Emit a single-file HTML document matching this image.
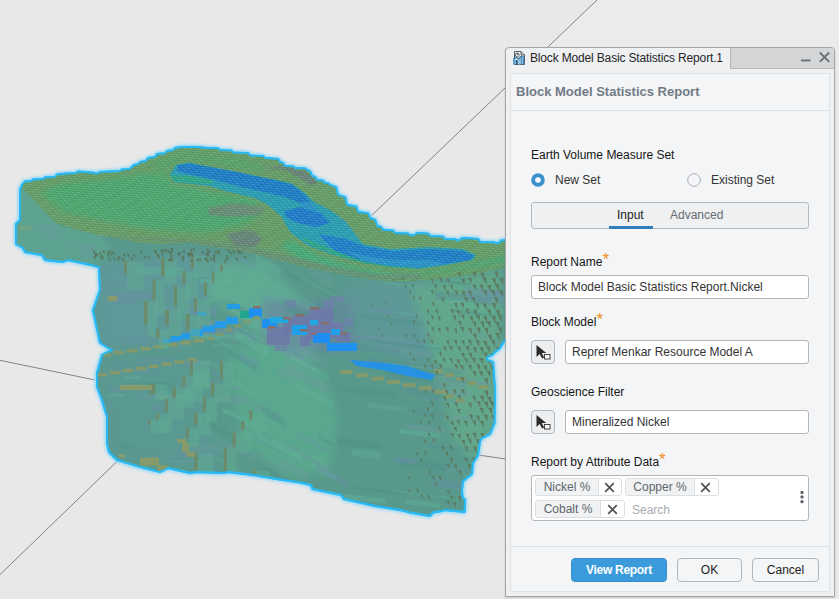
<!DOCTYPE html>
<html lang="en">
<head>
<meta charset="utf-8">
<title>Block Model Basic Statistics Report</title>
<style>
html,body{margin:0;padding:0;}
body{width:839px;height:599px;overflow:hidden;background:#e8e8e8;position:relative;font-family:"Liberation Sans",Arial,sans-serif;font-size:12px;color:#1c1c1c;}
#scene{position:absolute;left:0;top:0;width:839px;height:599px;display:block;}
.abs{position:absolute;}
#dlg{position:absolute;left:505px;top:47px;width:330px;height:550px;box-sizing:border-box;background:#eef0f2;border:1px solid #a4a6a8;border-radius:4px 4px 0 0;box-shadow:0 1px 2px rgba(0,0,0,.15);}
#tbar{position:absolute;left:0;top:0;width:328px;height:21px;}
#tbar .inactive{position:absolute;left:224px;top:0;width:104px;height:21px;background:#d4d6d8;border-bottom:1px solid #b4b6b8;border-left:1px solid #b4b6b8;border-radius:0 3px 0 0;box-sizing:border-box;}
#ttl{position:absolute;left:24px;top:2px;font-size:12px;line-height:16px;color:#262626;white-space:nowrap;letter-spacing:-0.16px;}
#panel{position:absolute;left:4px;top:25px;width:320px;height:519px;box-sizing:border-box;background:#f3f5f7;border:1px solid #dfe2e5;}
#hdr{position:absolute;left:0;top:0;width:318px;height:36px;border-bottom:1px solid #dde0e3;}
#hdr span{position:absolute;left:5px;top:10px;font-weight:bold;font-size:13px;line-height:16px;color:#727b85;white-space:nowrap;}
.lbl{position:absolute;left:20px;font-size:12px;line-height:14px;white-space:nowrap;color:#161616;}
.req{color:#ee8d22;font-size:17px;font-weight:normal;position:relative;top:-1px;left:0px;line-height:0;}
.inp{position:absolute;box-sizing:border-box;height:24px;background:#fff;border:1px solid #b3b6b9;border-radius:3px;font-size:12px;line-height:22px;padding-left:6px;color:#333;white-space:nowrap;overflow:hidden;}
.pick{position:absolute;left:20px;box-sizing:border-box;width:24px;height:24px;background:#eceef0;border:1px solid #b3b6b9;border-radius:4px;}
.btn{position:absolute;top:484px;box-sizing:border-box;height:24px;border:1px solid #b3b6b9;border-radius:4px;background:#f4f5f6;font-size:12px;line-height:22px;text-align:center;color:#1c1c1c;}
.chip{position:absolute;box-sizing:border-box;height:18px;border:1px solid #dcdfe2;border-radius:3px;background:#fff;overflow:hidden;}
.chip .t{position:absolute;left:0;top:0;bottom:0;background:#f0f2f3;border-right:1px solid #dcdfe2;font-size:12px;line-height:16px;color:#5f666d;text-align:center;}
.chip svg{position:absolute;top:3px;}
</style>
</head>
<body>
<svg id="scene" width="839" height="599" viewBox="0 0 839 599">
<rect width="839" height="599" fill="#e8e8e8"/>
<!--SCENE-->
<defs><filter id="glow" x="-5%" y="-5%" width="110%" height="110%"><feGaussianBlur stdDeviation="1.5"/></filter><filter id="b1" x="-20%" y="-20%" width="140%" height="140%"><feGaussianBlur stdDeviation="0.8"/></filter><filter id="b2" x="-20%" y="-20%" width="140%" height="140%"><feGaussianBlur stdDeviation="2.5"/></filter><filter id="b4" x="-30%" y="-30%" width="160%" height="160%"><feGaussianBlur stdDeviation="5"/></filter><clipPath id="cs"><polygon points="22,185 25,181.5 31.2,181.1 33,179.5 43.2,179.1 45,177.5 55.2,176.8 57,174.5 67,173.5 76.2,173.1 78,171.5 90,172.5 94.2,172.8 96,174 100,172 112,171.5 120.2,171.1 122,169.5 129.2,169.2 131,168 134,165 138.2,164.3 140,162 146.2,161.1 148,158 155.2,157.1 157,154 165.2,153.3 167,151 173.2,150.3 175,148 183,147 195,147 207,148 218.2,148.4 220,150 231.2,150.6 233,152.5 248.2,153.2 250,155.5 263.2,156.1 265,158 278.2,158.9 280,162 283.2,162.9 285,166 293.2,166.4 295,168 305.2,168.4 307,170 310.2,171.3 312,176 315.2,176.9 317,180 323.2,180.7 325,183 328.2,183.4 330,185 336.2,187.2 338,195 345.2,197.2 347,205 356.2,206.5 358,212 368.2,213.3 370,218 375.2,219.8 377,226 381.2,226.9 383,230 393.2,230.7 395,233 408.2,233.6 410,235.5 415.2,234.9 417,233 428.2,233.7 430,236 443.2,236.7 445,239 455.2,239.3 457,240.5 460.2,239.9 462,238 478.2,238.9 480,242 494.2,242.3 496,243.5 499.2,242.8 501,240.5 512,240 512,340 505,340 500,348 495,352 492,355 487,357 487,360 493,362 495,390 494.5,423 490,434 482,438 480,441 478,455 473,463 472,474 463,481 462,490 462.5,497 465,500 464.5,512 445,510 442,511 433,512.5 430,516 410,512.5 400,510 375,506 344,499 341,495 312.5,489 311,485 300,482.5 280,479.5 253,475 228,472 223,473 197,472 190,473 168,468 160,472 140,467 117,460 109,452 107,443 107,417 102,400 97,387 97,373 102,355 112,350 100,343 95,320 93,310 100,290 99,267 91,265 68,260 63,262 45,260 42,255 25,252 23,248 16,244 16,224 20,220 20,190"/></clipPath><clipPath id="ct"><polygon points="22,185 25,181.5 31.2,181.1 33,179.5 43.2,179.1 45,177.5 55.2,176.8 57,174.5 67,173.5 76.2,173.1 78,171.5 90,172.5 94.2,172.8 96,174 100,172 112,171.5 120.2,171.1 122,169.5 129.2,169.2 131,168 134,165 138.2,164.3 140,162 146.2,161.1 148,158 155.2,157.1 157,154 165.2,153.3 167,151 173.2,150.3 175,148 183,147 195,147 207,148 218.2,148.4 220,150 231.2,150.6 233,152.5 248.2,153.2 250,155.5 263.2,156.1 265,158 278.2,158.9 280,162 283.2,162.9 285,166 293.2,166.4 295,168 305.2,168.4 307,170 310.2,171.3 312,176 315.2,176.9 317,180 323.2,180.7 325,183 328.2,183.4 330,185 336.2,187.2 338,195 345.2,197.2 347,205 356.2,206.5 358,212 368.2,213.3 370,218 375.2,219.8 377,226 381.2,226.9 383,230 393.2,230.7 395,233 408.2,233.6 410,235.5 415.2,234.9 417,233 428.2,233.7 430,236 443.2,236.7 445,239 455.2,239.3 457,240.5 460.2,239.9 462,238 478.2,238.9 480,242 494.2,242.3 496,243.5 499.2,242.8 501,240.5 512,240 512,266 497,269 475,274 440,278.5 405,281.5 375,280 330,272 297,265 263,256 230,249 200,245 190,243 160,244 139,242.5 122,239 96,234.5 74,228.7 56,223 45,212 34,200 25,190.5 21,187"/></clipPath><pattern id="grid" width="5.4" height="2.400" patternUnits="userSpaceOnUse" patternTransform="matrix(1 0.07 0.9 1 0 0)"><rect x="0" y="0" width="3" height="0.9" fill="#7fe0c8" fill-opacity=".32"/><rect x="0" y="1.5" width="5.4" height=".9" fill="#2a5a40" fill-opacity=".10"/></pattern></defs>
<polygon points="597,0 839,0 839,599 506,599 506,86" fill="#ebebeb"/>
<path d="M597 0L369 218" stroke="#838383" stroke-width="1" fill="none"/>
<path d="M0 360.300L95 380" stroke="#838383" stroke-width="1" fill="none"/>
<path d="M0 574.600L118 460.500" stroke="#838383" stroke-width="1" fill="none"/>
<path d="M478 455L506 459" stroke="#838383" stroke-width="1" fill="none"/>
<polygon points="22,185 25,181.5 31.2,181.1 33,179.5 43.2,179.1 45,177.5 55.2,176.8 57,174.5 67,173.5 76.2,173.1 78,171.5 90,172.5 94.2,172.8 96,174 100,172 112,171.5 120.2,171.1 122,169.5 129.2,169.2 131,168 134,165 138.2,164.3 140,162 146.2,161.1 148,158 155.2,157.1 157,154 165.2,153.3 167,151 173.2,150.3 175,148 183,147 195,147 207,148 218.2,148.4 220,150 231.2,150.6 233,152.5 248.2,153.2 250,155.5 263.2,156.1 265,158 278.2,158.9 280,162 283.2,162.9 285,166 293.2,166.4 295,168 305.2,168.4 307,170 310.2,171.3 312,176 315.2,176.9 317,180 323.2,180.7 325,183 328.2,183.4 330,185 336.2,187.2 338,195 345.2,197.2 347,205 356.2,206.5 358,212 368.2,213.3 370,218 375.2,219.8 377,226 381.2,226.9 383,230 393.2,230.7 395,233 408.2,233.6 410,235.5 415.2,234.9 417,233 428.2,233.7 430,236 443.2,236.7 445,239 455.2,239.3 457,240.5 460.2,239.9 462,238 478.2,238.9 480,242 494.2,242.3 496,243.5 499.2,242.8 501,240.5 512,240 512,340 505,340 500,348 495,352 492,355 487,357 487,360 493,362 495,390 494.5,423 490,434 482,438 480,441 478,455 473,463 472,474 463,481 462,490 462.5,497 465,500 464.5,512 445,510 442,511 433,512.5 430,516 410,512.5 400,510 375,506 344,499 341,495 312.5,489 311,485 300,482.5 280,479.5 253,475 228,472 223,473 197,472 190,473 168,468 160,472 140,467 117,460 109,452 107,443 107,417 102,400 97,387 97,373 102,355 112,350 100,343 95,320 93,310 100,290 99,267 91,265 68,260 63,262 45,260 42,255 25,252 23,248 16,244 16,224 20,220 20,190" fill="#8fd8f8" stroke="#8fd8f8" stroke-width="5" stroke-linejoin="round" filter="url(#glow)"/>
<polygon points="22,185 25,181.5 31.2,181.1 33,179.5 43.2,179.1 45,177.5 55.2,176.8 57,174.5 67,173.5 76.2,173.1 78,171.5 90,172.5 94.2,172.8 96,174 100,172 112,171.5 120.2,171.1 122,169.5 129.2,169.2 131,168 134,165 138.2,164.3 140,162 146.2,161.1 148,158 155.2,157.1 157,154 165.2,153.3 167,151 173.2,150.3 175,148 183,147 195,147 207,148 218.2,148.4 220,150 231.2,150.6 233,152.5 248.2,153.2 250,155.5 263.2,156.1 265,158 278.2,158.9 280,162 283.2,162.9 285,166 293.2,166.4 295,168 305.2,168.4 307,170 310.2,171.3 312,176 315.2,176.9 317,180 323.2,180.7 325,183 328.2,183.4 330,185 336.2,187.2 338,195 345.2,197.2 347,205 356.2,206.5 358,212 368.2,213.3 370,218 375.2,219.8 377,226 381.2,226.9 383,230 393.2,230.7 395,233 408.2,233.6 410,235.5 415.2,234.9 417,233 428.2,233.7 430,236 443.2,236.7 445,239 455.2,239.3 457,240.5 460.2,239.9 462,238 478.2,238.9 480,242 494.2,242.3 496,243.5 499.2,242.8 501,240.5 512,240 512,340 505,340 500,348 495,352 492,355 487,357 487,360 493,362 495,390 494.5,423 490,434 482,438 480,441 478,455 473,463 472,474 463,481 462,490 462.5,497 465,500 464.5,512 445,510 442,511 433,512.5 430,516 410,512.5 400,510 375,506 344,499 341,495 312.5,489 311,485 300,482.5 280,479.5 253,475 228,472 223,473 197,472 190,473 168,468 160,472 140,467 117,460 109,452 107,443 107,417 102,400 97,387 97,373 102,355 112,350 100,343 95,320 93,310 100,290 99,267 91,265 68,260 63,262 45,260 42,255 25,252 23,248 16,244 16,224 20,220 20,190" fill="#58998c" stroke="#2cbcf4" stroke-width="2" stroke-linejoin="round"/>
<g clip-path="url(#cs)">
<g filter="url(#b4)">
<polygon points="95,262 215,250 225,300 190,345 100,352" fill="#6396a0" fill-opacity=".6"/>
<polygon points="97,360 200,355 215,470 110,460" fill="#5f95a0" fill-opacity=".3"/>
<polygon points="215,262 262,262 300,300 318,350 300,380 262,340 232,312 210,300" fill="#60ac94" fill-opacity=".9"/>
<polygon points="228,350 262,345 322,372 338,420 330,470 290,478 240,440" fill="#5aa88e" fill-opacity=".9"/>
<polygon points="340,285 430,278 430,360 400,362 360,340" fill="#6098a0" fill-opacity=".55"/>
<polygon points="408,288 500,270 498,420 474,462 452,440 442,385 426,330" fill="#64aa8c" fill-opacity=".8"/>
<polygon points="262,300 350,300 356,350 300,354 262,340" fill="#6a80a6" fill-opacity=".55"/>
</g>
<rect x="37" y="224" width="21" height="5" fill="#6a90a6" fill-opacity=".6"/>
<rect x="40" y="229" width="18" height="6" fill="#6a90a6" fill-opacity=".6"/>
<rect x="44" y="235" width="14" height="5" fill="#6a90a6" fill-opacity=".6"/>
<rect x="66" y="243.5" width="8" height="5" fill="#6a90a6" fill-opacity=".6"/>
<rect x="79" y="244" width="16" height="7" fill="#6a90a6" fill-opacity=".6"/>
<rect x="82" y="251" width="13" height="7" fill="#6a90a6" fill-opacity=".6"/>
<rect x="18.5" y="225.7" width="13" height="4.5" fill="#7f9a6c" />
<polygon points="14,190 24,186 58,222 100,234 112,250 96,268 40,260 14,248" fill="#60aa94" fill-opacity=".55" filter="url(#b2)"/>
<polygon points="133.86,293.377 171.643,293.377 171.643,295.877 133.86,295.877" fill="#6a90a8" fill-opacity="0.27"/>
<polygon points="164.935,451.218 187.449,451.218 187.449,453.718 164.935,453.718" fill="#6c9a9e" fill-opacity="0.35"/>
<polygon points="123.88,376.618 140.948,376.618 140.948,379.118 123.88,379.118" fill="#62b49a" fill-opacity="0.41"/>
<polygon points="164.96,274.867 200.454,274.867 200.454,277.367 164.96,277.367" fill="#62b49a" fill-opacity="0.26"/>
<polygon points="198.016,322.239 218.065,322.239 218.065,324.739 198.016,324.739" fill="#6a90a8" fill-opacity="0.33"/>
<polygon points="192.935,299.591 228.291,299.591 228.291,304.591 192.935,304.591" fill="#4f9088" fill-opacity="0.27"/>
<polygon points="180.453,379.389 217.119,379.389 217.119,386.889 180.453,386.889" fill="#6a90a8" fill-opacity="0.36"/>
<polygon points="132.698,383.797 163.559,383.797 163.559,388.797 132.698,388.797" fill="#62b49a" fill-opacity="0.45"/>
<polygon points="178.879,312.772 213.984,312.772 213.984,320.272 178.879,320.272" fill="#4f9088" fill-opacity="0.43"/>
<polygon points="129.553,465.876 148.685,465.876 148.685,473.376 129.553,473.376" fill="#62b49a" fill-opacity="0.44"/>
<polygon points="113.238,363.704 129.61,363.704 129.61,366.204 113.238,366.204" fill="#6a90a8" fill-opacity="0.39"/>
<polygon points="200.057,327.259 239.393,327.259 239.393,334.759 200.057,334.759" fill="#6a90a8" fill-opacity="0.45"/>
<polygon points="103.252,281.468 127.699,281.468 127.699,283.968 103.252,283.968" fill="#6a8eaa" fill-opacity="0.43"/>
<polygon points="132.153,382.213 170.996,382.213 170.996,389.713 132.153,389.713" fill="#4f9088" fill-opacity="0.43"/>
<polygon points="201.445,334.177 249.368,334.177 249.368,339.177 201.445,339.177" fill="#62b49a" fill-opacity="0.40"/>
<polygon points="154.243,307.387 179.303,307.387 179.303,312.387 154.243,312.387" fill="#6c9a9e" fill-opacity="0.35"/>
<polygon points="199.571,278.761 230.292,278.761 230.292,283.761 199.571,283.761" fill="#62b49a" fill-opacity="0.45"/>
<polygon points="198.678,319.912 228.214,319.912 228.214,324.912 198.678,324.912" fill="#6c9a9e" fill-opacity="0.49"/>
<polygon points="113.111,298.653 136.229,298.653 136.229,303.653 113.111,303.653" fill="#6a8eaa" fill-opacity="0.37"/>
<polygon points="165.695,316.651 180.838,316.651 180.838,324.151 165.695,324.151" fill="#6a90a8" fill-opacity="0.34"/>
<polygon points="162.961,460.244 202.128,460.244 202.128,462.744 162.961,462.744" fill="#6c9a9e" fill-opacity="0.47"/>
<polygon points="188.596,443.899 231.522,443.899 231.522,451.399 188.596,451.399" fill="#6c9a9e" fill-opacity="0.35"/>
<polygon points="107.424,393.932 124.603,393.932 124.603,396.432 107.424,396.432" fill="#62b49a" fill-opacity="0.36"/>
<polygon points="108.191,386.951 126.775,386.951 126.775,391.951 108.191,391.951" fill="#6a90a8" fill-opacity="0.28"/>
<polygon points="138.633,267.304 184.235,267.304 184.235,274.804 138.633,274.804" fill="#62b49a" fill-opacity="0.41"/>
<polygon points="209.656,387.274 241.251,387.274 241.251,389.774 209.656,389.774" fill="#6c9a9e" fill-opacity="0.50"/>
<polygon points="150.919,362.638 168.925,362.638 168.925,365.138 150.919,365.138" fill="#4f9088" fill-opacity="0.44"/>
<polygon points="152.435,405.948 185.506,405.948 185.506,410.948 152.435,410.948" fill="#6a90a8" fill-opacity="0.34"/>
<polygon points="177.808,452.142 219.343,452.142 219.343,457.142 177.808,457.142" fill="#6a8eaa" fill-opacity="0.42"/>
<polygon points="126.334,338.274 147.18,338.274 147.18,343.274 126.334,343.274" fill="#6a90a8" fill-opacity="0.39"/>
<polygon points="155.324,394.38 191.787,394.38 191.787,399.38 155.324,399.38" fill="#62b49a" fill-opacity="0.45"/>
<polygon points="183.785,309.162 216.902,309.162 216.902,314.162 183.785,314.162" fill="#6a8eaa" fill-opacity="0.50"/>
<polygon points="189.814,360.226 211.591,360.226 211.591,365.226 189.814,365.226" fill="#6c9a9e" fill-opacity="0.45"/>
<polygon points="181.775,334.7 230.883,334.7 230.883,337.2 181.775,337.2" fill="#62b49a" fill-opacity="0.28"/>
<polygon points="151.41,332.249 183.302,332.249 183.302,334.749 151.41,334.749" fill="#6c9a9e" fill-opacity="0.48"/>
<polygon points="136.281,395.772 180.494,395.772 180.494,398.272 136.281,398.272" fill="#6c9a9e" fill-opacity="0.45"/>
<polygon points="185.017,361.431 206.265,361.431 206.265,366.431 185.017,366.431" fill="#6a8eaa" fill-opacity="0.45"/>
<polygon points="211.599,344.334 240.647,344.334 240.647,346.834 211.599,346.834" fill="#62b49a" fill-opacity="0.29"/>
<polygon points="110.245,293.439 156.914,293.439 156.914,298.439 110.245,298.439" fill="#6a90a8" fill-opacity="0.46"/>
<polygon points="212.637,398.712 239.901,398.712 239.901,403.712 212.637,403.712" fill="#6a8eaa" fill-opacity="0.25"/>
<polygon points="211.507,397.132 244.937,397.132 244.937,402.132 211.507,402.132" fill="#6c9a9e" fill-opacity="0.50"/>
<polygon points="118.377,443.773 134.356,443.773 134.356,448.773 118.377,448.773" fill="#4f9088" fill-opacity="0.38"/>
<polygon points="186.642,329.806 220.694,329.806 220.694,334.806 186.642,334.806" fill="#6a8eaa" fill-opacity="0.48"/>
<polygon points="137.454,357.297 172.871,357.297 172.871,364.797 137.454,364.797" fill="#6a90a8" fill-opacity="0.28"/>
<polygon points="113.22,368.194 158.769,368.194 158.769,373.194 113.22,373.194" fill="#6a90a8" fill-opacity="0.25"/>
<polygon points="296.905,287.916 326.109,303.979 326.109,306.479 296.905,290.416" fill="#6c9a9e" fill-opacity="0.27"/>
<polygon points="283.468,366.76 312.943,382.971 312.943,385.471 283.468,369.26" fill="#6c9a9e" fill-opacity="0.26"/>
<polygon points="227,259.284 244.933,269.147 244.933,276.647 227,266.784" fill="#6c9a9e" fill-opacity="0.26"/>
<polygon points="307.811,263.941 332.58,277.564 332.58,287.564 307.811,273.941" fill="#6c9a9e" fill-opacity="0.38"/>
<polygon points="284.664,349.516 315.663,366.565 315.663,374.065 284.664,357.016" fill="#6c9a9e" fill-opacity="0.49"/>
<polygon points="285.41,442.838 328.675,466.634 328.675,471.634 285.41,447.838" fill="#6c9a9e" fill-opacity="0.47"/>
<polygon points="228.298,348.456 255.797,363.581 255.797,371.081 228.298,355.956" fill="#4f9088" fill-opacity="0.33"/>
<polygon points="282.183,344.235 303.564,355.994 303.564,360.994 282.183,349.235" fill="#6a8eaa" fill-opacity="0.47"/>
<polygon points="222.761,407.546 257.569,426.691 257.569,431.691 222.761,412.546" fill="#62b49a" fill-opacity="0.47"/>
<polygon points="316.268,298.309 359.843,322.276 359.843,329.776 316.268,305.809" fill="#4f9088" fill-opacity="0.29"/>
<polygon points="281.801,299.217 317.99,319.121 317.99,329.121 281.801,309.217" fill="#4f9088" fill-opacity="0.33"/>
<polygon points="227.511,320.076 264.175,340.241 264.175,342.741 227.511,322.576" fill="#62b49a" fill-opacity="0.39"/>
<polygon points="255.653,253.978 280.598,267.698 280.598,277.698 255.653,263.978" fill="#62b49a" fill-opacity="0.38"/>
<polygon points="212.393,466.718 251.044,487.976 251.044,490.476 212.393,469.218" fill="#6a8eaa" fill-opacity="0.32"/>
<polygon points="209.553,421.379 232.666,434.092 232.666,439.092 209.553,426.379" fill="#4f9088" fill-opacity="0.46"/>
<polygon points="282.737,458.12 309.915,473.068 309.915,483.068 282.737,468.12" fill="#6c9a9e" fill-opacity="0.39"/>
<polygon points="285.548,269.682 302.274,278.881 302.274,283.881 285.548,274.682" fill="#4f9088" fill-opacity="0.47"/>
<polygon points="235.926,253.703 253.583,263.414 253.583,268.414 235.926,258.703" fill="#6a8eaa" fill-opacity="0.40"/>
<polygon points="230.577,308.179 249.227,318.437 249.227,320.937 230.577,310.679" fill="#62b49a" fill-opacity="0.50"/>
<polygon points="253.042,451.394 286.694,469.902 286.694,472.402 253.042,453.894" fill="#6c9a9e" fill-opacity="0.43"/>
<polygon points="312.884,463.227 335.741,475.798 335.741,480.798 312.884,468.227" fill="#62b49a" fill-opacity="0.48"/>
<polygon points="277.297,366.839 298.473,378.486 298.473,385.986 277.297,374.339" fill="#6c9a9e" fill-opacity="0.42"/>
<polygon points="236.11,426.809 280.945,451.469 280.945,453.969 236.11,429.309" fill="#6a8eaa" fill-opacity="0.25"/>
<polygon points="263.15,465.171 293.577,481.906 293.577,486.906 263.15,470.171" fill="#4f9088" fill-opacity="0.28"/>
<polygon points="299.176,345.079 329.026,361.497 329.026,368.997 299.176,352.579" fill="#6c9a9e" fill-opacity="0.33"/>
<polygon points="229.746,300.505 250.705,312.032 250.705,317.032 229.746,305.505" fill="#4f9088" fill-opacity="0.50"/>
<polygon points="317.916,434.137 333.344,442.623 333.344,447.623 317.916,439.137" fill="#4f9088" fill-opacity="0.29"/>
<polygon points="214.716,435.079 255.832,457.693 255.832,462.693 214.716,440.079" fill="#6c9a9e" fill-opacity="0.31"/>
<polygon points="238.702,351.08 258.428,361.929 258.428,369.429 238.702,358.58" fill="#6a8eaa" fill-opacity="0.32"/>
<polygon points="315.605,463.977 347.018,481.254 347.018,486.254 315.605,468.977" fill="#6a8eaa" fill-opacity="0.49"/>
<polygon points="240.598,328.448 255.63,336.716 255.63,344.216 240.598,335.948" fill="#6a8eaa" fill-opacity="0.37"/>
<polygon points="262.818,294.216 292.96,310.794 292.96,313.294 262.818,296.716" fill="#6a8eaa" fill-opacity="0.32"/>
<polygon points="215.322,337.892 231.572,346.83 231.572,349.33 215.322,340.392" fill="#62b49a" fill-opacity="0.33"/>
<polygon points="231.773,378.828 262.649,395.81 262.649,400.81 231.773,383.828" fill="#5fae92" fill-opacity="0.47"/>
<polygon points="295.165,381.243 333.094,402.104 333.094,409.604 295.165,388.743" fill="#62b49a" fill-opacity="0.32"/>
<polygon points="276.151,281.845 315.897,303.706 315.897,313.706 276.151,291.845" fill="#5fae92" fill-opacity="0.36"/>
<polygon points="285.621,361.219 327.918,384.482 327.918,394.482 285.621,371.219" fill="#6c9a9e" fill-opacity="0.46"/>
<polygon points="297.538,431.81 330.06,449.697 330.06,454.697 297.538,436.81" fill="#6a8eaa" fill-opacity="0.26"/>
<polygon points="220.306,329.356 238.453,339.337 238.453,346.837 220.306,336.856" fill="#6c9a9e" fill-opacity="0.26"/>
<polygon points="207.167,366.918 229.503,379.203 229.503,384.203 207.167,371.918" fill="#6a8eaa" fill-opacity="0.36"/>
<polygon points="213.063,455.151 254.999,478.216 254.999,480.716 213.063,457.651" fill="#5fae92" fill-opacity="0.38"/>
<polygon points="290.759,354.249 330.035,375.851 330.035,380.851 290.759,359.249" fill="#62b49a" fill-opacity="0.43"/>
<polygon points="228.6,412.762 272.872,437.112 272.872,444.612 228.6,420.262" fill="#4f9088" fill-opacity="0.27"/>
<polygon points="309.704,313.21 326.106,322.232 326.106,327.232 309.704,318.21" fill="#6a8eaa" fill-opacity="0.40"/>
<polygon points="243.154,393.338 278.94,413.02 278.94,423.02 243.154,403.338" fill="#6c9a9e" fill-opacity="0.28"/>
<polygon points="260.478,356.876 304.654,381.172 304.654,383.672 260.478,359.376" fill="#5fae92" fill-opacity="0.30"/>
<polygon points="261.306,405.952 284.872,418.913 284.872,426.413 261.306,413.452" fill="#4f9088" fill-opacity="0.44"/>
<polygon points="319.23,370.797 343.58,384.189 343.58,386.689 319.23,373.297" fill="#4f9088" fill-opacity="0.25"/>
<polygon points="257.782,430.377 301.825,454.601 301.825,462.101 257.782,437.877" fill="#62b49a" fill-opacity="0.35"/>
<polygon points="310.404,454.718 327.642,464.199 327.642,466.699 310.404,457.218" fill="#62b49a" fill-opacity="0.44"/>
<polygon points="235.108,329.102 268.209,347.307 268.209,357.307 235.108,339.102" fill="#62b49a" fill-opacity="0.47"/>
<polygon points="285.884,300.904 327.815,323.967 327.815,331.467 285.884,308.404" fill="#4f9088" fill-opacity="0.26"/>
<polygon points="205.413,358.173 233.936,373.861 233.936,378.861 205.413,363.173" fill="#5fae92" fill-opacity="0.29"/>
<polygon points="244.555,319.537 284.762,341.651 284.762,344.151 244.555,322.037" fill="#62b49a" fill-opacity="0.44"/>
<polygon points="301.498,276.409 344.29,299.945 344.29,302.445 301.498,278.909" fill="#5fae92" fill-opacity="0.32"/>
<polygon points="379.556,366.438 449.495,374.831 449.495,377.331 379.556,368.938" fill="#4f9088" fill-opacity="0.48"/>
<polygon points="440.905,467.936 474.937,472.02 474.937,474.52 440.905,470.436" fill="#4f9088" fill-opacity="0.41"/>
<polygon points="343.826,493.628 385.638,498.646 385.638,503.646 343.826,498.628" fill="#62b49a" fill-opacity="0.44"/>
<polygon points="445.623,374.104 467.073,376.679 467.073,384.179 445.623,381.604" fill="#5a8c98" fill-opacity="0.39"/>
<polygon points="435.132,290.885 491.749,297.679 491.749,305.179 435.132,298.385" fill="#5a8c98" fill-opacity="0.44"/>
<polygon points="423.119,342.966 445.567,345.66 445.567,350.66 423.119,347.966" fill="#62b49a" fill-opacity="0.37"/>
<polygon points="374.986,345.51 431.938,352.344 431.938,357.344 374.986,350.51" fill="#6c9a9e" fill-opacity="0.41"/>
<polygon points="368.134,402.611 407.852,407.377 407.852,412.377 368.134,407.611" fill="#62b49a" fill-opacity="0.27"/>
<polygon points="400.097,458.602 447.616,464.304 447.616,471.804 400.097,466.102" fill="#4f9088" fill-opacity="0.50"/>
<polygon points="391.994,310.711 421.614,314.266 421.614,316.766 391.994,313.211" fill="#62b49a" fill-opacity="0.34"/>
<polygon points="334.575,332.608 367.493,336.558 367.493,341.558 334.575,337.608" fill="#6a8eaa" fill-opacity="0.44"/>
<polygon points="386.045,371.054 432.253,376.599 432.253,384.099 386.045,378.554" fill="#4f9088" fill-opacity="0.33"/>
<polygon points="329.93,341.054 398.314,349.26 398.314,354.26 329.93,346.054" fill="#5a8c98" fill-opacity="0.38"/>
<polygon points="446.45,466.699 471.08,469.655 471.08,474.655 446.45,471.699" fill="#6c9a9e" fill-opacity="0.35"/>
<polygon points="391.337,489.868 453.772,497.36 453.772,499.86 391.337,492.368" fill="#62b49a" fill-opacity="0.26"/>
<polygon points="433.522,477.053 477.185,482.293 477.185,489.793 433.522,484.553" fill="#6a8eaa" fill-opacity="0.27"/>
<polygon points="468.838,484.195 515.231,489.763 515.231,497.263 468.838,491.695" fill="#6c9a9e" fill-opacity="0.31"/>
<polygon points="337.447,313.963 383.566,319.497 383.566,321.997 337.447,316.463" fill="#6c9a9e" fill-opacity="0.27"/>
<polygon points="444.298,280.301 470.58,283.454 470.58,285.954 444.298,282.801" fill="#4f9088" fill-opacity="0.49"/>
<polygon points="420.236,396.216 462.107,401.24 462.107,403.74 420.236,398.716" fill="#6a8eaa" fill-opacity="0.27"/>
<polygon points="403.91,408.236 443.314,412.965 443.314,417.965 403.91,413.236" fill="#5a8c98" fill-opacity="0.25"/>
<polygon points="405.996,499.202 439.926,503.274 439.926,508.274 405.996,504.202" fill="#62b49a" fill-opacity="0.37"/>
<polygon points="357.563,334.353 425.594,342.517 425.594,347.517 357.563,339.353" fill="#6a8eaa" fill-opacity="0.26"/>
<polygon points="399.73,428.382 440.73,433.302 440.73,438.302 399.73,433.382" fill="#62b49a" fill-opacity="0.42"/>
<polygon points="468.026,329.893 489.731,332.498 489.731,337.498 468.026,334.893" fill="#6c9a9e" fill-opacity="0.34"/>
<polygon points="383.417,281.486 418.023,285.638 418.023,288.138 383.417,283.986" fill="#62b49a" fill-opacity="0.37"/>
<polygon points="352.066,448.489 381.763,452.052 381.763,459.552 352.066,455.989" fill="#62b49a" fill-opacity="0.32"/>
<polygon points="462.293,303.982 513.473,310.123 513.473,315.123 462.293,308.982" fill="#62b49a" fill-opacity="0.37"/>
<polygon points="465.663,292.412 515.403,298.381 515.403,305.881 465.663,299.912" fill="#6a8eaa" fill-opacity="0.30"/>
<polygon points="475.859,311.22 498.451,313.931 498.451,316.431 475.859,313.72" fill="#62b49a" fill-opacity="0.35"/>
<polygon points="463.707,474.388 520.343,481.185 520.343,483.685 463.707,476.888" fill="#62b49a" fill-opacity="0.33"/>
<polygon points="349.682,485.894 406.997,492.772 406.997,495.272 349.682,488.394" fill="#4f9088" fill-opacity="0.42"/>
<polygon points="380.579,362.254 417.164,366.645 417.164,371.645 380.579,367.254" fill="#6a8eaa" fill-opacity="0.25"/>
<polygon points="364.769,357.323 432.545,365.456 432.545,367.956 364.769,359.823" fill="#5a8c98" fill-opacity="0.49"/>
<polygon points="353.184,358.458 414.263,365.788 414.263,373.288 353.184,365.958" fill="#6a8eaa" fill-opacity="0.26"/>
<polygon points="395.754,361.997 461.73,369.914 461.73,374.914 395.754,366.997" fill="#4f9088" fill-opacity="0.34"/>
<polygon points="463.519,286.662 504.059,291.527 504.059,299.027 463.519,294.162" fill="#6a8eaa" fill-opacity="0.34"/>
<polygon points="394.248,456.734 417.348,459.506 417.348,464.506 394.248,461.734" fill="#6a8eaa" fill-opacity="0.47"/>
<polygon points="374.251,339.909 442.136,348.055 442.136,350.555 374.251,342.409" fill="#4f9088" fill-opacity="0.44"/>
<polygon points="430.332,483.33 465.203,487.515 465.203,490.015 430.332,485.83" fill="#6a8eaa" fill-opacity="0.46"/>
<polygon points="337.162,437.426 380.449,442.62 380.449,450.12 337.162,444.926" fill="#4f9088" fill-opacity="0.48"/>
<polygon points="450.368,309.196 495.195,314.575 495.195,317.075 450.368,311.696" fill="#4f9088" fill-opacity="0.46"/>
<polygon points="443.65,413.596 480.039,417.963 480.039,422.963 443.65,418.596" fill="#6c9a9e" fill-opacity="0.34"/>
<polygon points="445.16,297.383 475.025,300.967 475.025,305.967 445.16,302.383" fill="#62b49a" fill-opacity="0.35"/>
<polygon points="423.927,385.972 471.158,391.639 471.158,396.639 423.927,390.972" fill="#6c9a9e" fill-opacity="0.47"/>
<polygon points="478.052,338.276 502.256,341.181 502.256,343.681 478.052,340.776" fill="#6c9a9e" fill-opacity="0.37"/>
<polygon points="433.563,378.332 465.273,382.137 465.273,389.637 433.563,385.832" fill="#6c9a9e" fill-opacity="0.41"/>
<polygon points="427.857,444.555 490.207,452.037 490.207,454.537 427.857,447.055" fill="#4f9088" fill-opacity="0.32"/>
<polygon points="410.701,362.054 467.605,368.882 467.605,373.882 410.701,367.054" fill="#6c9a9e" fill-opacity="0.31"/>
<polygon points="359.254,313.731 423.463,321.436 423.463,326.436 359.254,318.731" fill="#4f9088" fill-opacity="0.27"/>
<polygon points="360.265,334.109 406.58,339.667 406.58,342.167 360.265,336.609" fill="#6c9a9e" fill-opacity="0.50"/>
<polygon points="336.373,384.448 397.328,391.762 397.328,399.262 336.373,391.948" fill="#4f9088" fill-opacity="0.26"/>
<polygon points="366.988,306.228 396.467,309.765 396.467,314.765 366.988,311.228" fill="#6a8eaa" fill-opacity="0.34"/>
<polygon points="458.58,378.805 491.578,382.765 491.578,385.265 458.58,381.305" fill="#6a8eaa" fill-opacity="0.41"/>
<polygon points="433.553,356.934 455.426,359.559 455.426,364.559 433.553,361.934" fill="#62b49a" fill-opacity="0.26"/>
<polygon points="479.98,288.412 536.591,295.205 536.591,300.205 479.98,293.412" fill="#6a8eaa" fill-opacity="0.45"/>
<polygon points="385.439,361.798 436.49,367.924 436.49,370.424 385.439,364.298" fill="#62b49a" fill-opacity="0.26"/>
<polygon points="399.3,386.372 439.709,391.221 439.709,398.721 399.3,393.872" fill="#5a8c98" fill-opacity="0.29"/>
<polygon points="405.44,423.673 445.328,428.459 445.328,433.459 405.44,428.673" fill="#6c9a9e" fill-opacity="0.50"/>
<polygon points="426.85,371.926 449.418,374.634 449.418,379.634 426.85,376.926" fill="#6c9a9e" fill-opacity="0.35"/>
<rect x="163" y="339" width="8" height="4" fill="#259ae6" />
<rect x="171" y="336" width="10" height="5" fill="#259ae6" />
<rect x="181" y="333" width="10" height="6" fill="#259ae6" />
<rect x="191" y="329" width="12" height="7" fill="#259ae6" />
<rect x="203" y="325" width="12" height="7" fill="#259ae6" />
<rect x="215" y="321" width="11" height="7" fill="#259ae6" />
<rect x="226" y="317" width="12" height="7" fill="#259ae6" />
<rect x="197" y="312" width="10" height="4" fill="#259ae6" />
<rect x="227" y="304" width="13" height="5" fill="#259ae6" />
<rect x="267" y="327" width="23" height="18" fill="#6e78a8" fill-opacity=".88"/>
<rect x="283" y="318" width="12" height="17" fill="#6e78a8" fill-opacity=".88"/>
<rect x="293" y="315" width="17" height="13" fill="#6e78a8" fill-opacity=".88"/>
<rect x="310" y="308" width="23" height="20" fill="#6e78a8" fill-opacity=".88"/>
<rect x="307" y="327" width="13" height="13" fill="#6e78a8" fill-opacity=".88"/>
<rect x="318" y="323" width="25" height="15" fill="#6e78a8" fill-opacity=".88"/>
<rect x="337" y="333" width="13" height="9" fill="#6e78a8" fill-opacity=".88"/>
<rect x="300" y="336" width="10" height="10" fill="#6e78a8" fill-opacity=".88"/>
<rect x="286" y="300" width="10" height="8" fill="#6c82a8" fill-opacity=".7"/>
<rect x="322" y="300" width="12" height="8" fill="#6c82a8" fill-opacity=".7"/>
<rect x="344" y="318" width="10" height="8" fill="#6c82a8" fill-opacity=".7"/>
<rect x="275" y="345" width="12" height="6" fill="#6c82a8" fill-opacity=".7"/>
<rect x="330" y="296" width="14" height="6" fill="#6c82a8" fill-opacity=".7"/>
<rect x="249" y="308" width="13" height="10" fill="#1e90f0" />
<rect x="262" y="319" width="15" height="9" fill="#1e90f0" />
<rect x="270" y="317" width="18" height="6" fill="#22a8e0" />
<rect x="292" y="325" width="15" height="10" fill="#20a0e8" />
<rect x="310" y="320" width="8" height="5" fill="#22a8e0" />
<rect x="313" y="333" width="17" height="10" fill="#1e8cf0" />
<rect x="331" y="329" width="9" height="6" fill="#20a0e8" />
<rect x="327" y="343" width="30" height="8" fill="#1e90ee" />
<rect x="240" y="311" width="9" height="7" fill="#22a590" />
<rect x="310" y="307" width="9" height="2.5" fill="#86706a" />
<rect x="296" y="314" width="8" height="2.5" fill="#86706a" />
<rect x="283" y="317" width="8" height="2.5" fill="#86706a" />
<rect x="321" y="322" width="8" height="2.5" fill="#86706a" />
<rect x="340" y="332" width="7" height="2.5" fill="#86706a" />
<rect x="268" y="326" width="8" height="2.5" fill="#86706a" />
<rect x="300" y="329" width="8" height="2.5" fill="#86706a" />
<rect x="311" y="333" width="6" height="2" fill="#86706a" />
<rect x="253" y="306" width="8" height="2.5" fill="#86706a" />
<polygon points="350,360 382,362.5 407,366 435,375 432,380 407,376 382,370 357,366" fill="#2592e4" />
<rect x="100" y="353" width="10.7" height="3.5" fill="#849a6c" />
<rect x="113.375" y="351" width="10.7" height="3.5" fill="#849a6c" />
<rect x="126.75" y="349" width="10.7" height="3.5" fill="#849a6c" />
<rect x="140.125" y="347" width="10.7" height="3.5" fill="#849a6c" />
<rect x="153.5" y="345" width="10.7" height="3.5" fill="#849a6c" />
<rect x="166.875" y="343" width="10.7" height="3.5" fill="#849a6c" />
<rect x="180.25" y="341" width="10.7" height="3.5" fill="#849a6c" />
<rect x="193.625" y="339" width="10.7" height="3.5" fill="#849a6c" />
<rect x="97" y="373" width="10.3" height="3.5" fill="#849a6c" />
<rect x="109.875" y="370.875" width="10.3" height="3.5" fill="#849a6c" />
<rect x="122.75" y="368.75" width="10.3" height="3.5" fill="#849a6c" />
<rect x="135.625" y="366.625" width="10.3" height="3.5" fill="#849a6c" />
<rect x="148.5" y="364.5" width="10.3" height="3.5" fill="#849a6c" />
<rect x="161.375" y="362.375" width="10.3" height="3.5" fill="#849a6c" />
<rect x="174.25" y="360.25" width="10.3" height="3.5" fill="#849a6c" />
<rect x="187.125" y="358.125" width="10.3" height="3.5" fill="#849a6c" />
<rect x="340" y="370" width="12.5714" height="4" fill="#849a6c" />
<rect x="355.714" y="373.286" width="12.5714" height="4" fill="#849a6c" />
<rect x="371.429" y="376.571" width="12.5714" height="4" fill="#849a6c" />
<rect x="387.143" y="379.857" width="12.5714" height="4" fill="#849a6c" />
<rect x="402.857" y="383.143" width="12.5714" height="4" fill="#849a6c" />
<rect x="418.571" y="386.429" width="12.5714" height="4" fill="#849a6c" />
<rect x="434.286" y="389.714" width="12.5714" height="4" fill="#849a6c" />
<rect x="434" y="369" width="8.96" height="4" fill="#849a6c" />
<rect x="445.2" y="373" width="8.96" height="4" fill="#849a6c" />
<rect x="456.4" y="377" width="8.96" height="4" fill="#849a6c" />
<rect x="467.6" y="381" width="8.96" height="4" fill="#849a6c" />
<rect x="478.8" y="385" width="8.96" height="4" fill="#849a6c" />
<rect x="423" y="386" width="8.8" height="3.5" fill="#849a6c" />
<rect x="434" y="390.25" width="8.8" height="3.5" fill="#849a6c" />
<rect x="445" y="394.5" width="8.8" height="3.5" fill="#849a6c" />
<rect x="456" y="398.75" width="8.8" height="3.5" fill="#849a6c" />
<rect x="207" y="337" width="7.33333" height="3" fill="#7f9a70" />
<rect x="216.167" y="332.833" width="7.33333" height="3" fill="#7f9a70" />
<rect x="225.333" y="328.667" width="7.33333" height="3" fill="#7f9a70" />
<rect x="234.5" y="324.5" width="7.33333" height="3" fill="#7f9a70" />
<rect x="243.667" y="320.333" width="7.33333" height="3" fill="#7f9a70" />
<rect x="252.833" y="316.167" width="7.33333" height="3" fill="#7f9a70" />
<polygon points="22,185 25,181.5 31.2,181.1 33,179.5 43.2,179.1 45,177.5 55.2,176.8 57,174.5 67,173.5 76.2,173.1 78,171.5 90,172.5 94.2,172.8 96,174 100,172 112,171.5 120.2,171.1 122,169.5 129.2,169.2 131,168 134,165 138.2,164.3 140,162 146.2,161.1 148,158 155.2,157.1 157,154 165.2,153.3 167,151 173.2,150.3 175,148 183,147 195,147 207,148 218.2,148.4 220,150 231.2,150.6 233,152.5 248.2,153.2 250,155.5 263.2,156.1 265,158 278.2,158.9 280,162 283.2,162.9 285,166 293.2,166.4 295,168 305.2,168.4 307,170 310.2,171.3 312,176 315.2,176.9 317,180 323.2,180.7 325,183 328.2,183.4 330,185 336.2,187.2 338,195 345.2,197.2 347,205 356.2,206.5 358,212 368.2,213.3 370,218 375.2,219.8 377,226 381.2,226.9 383,230 393.2,230.7 395,233 408.2,233.6 410,235.5 415.2,234.9 417,233 428.2,233.7 430,236 443.2,236.7 445,239 455.2,239.3 457,240.5 460.2,239.9 462,238 478.2,238.9 480,242 494.2,242.3 496,243.5 499.2,242.8 501,240.5 512,240 512,266 497,269 475,274 440,278.5 405,281.5 375,280 330,272 297,265 263,256 230,249 200,245 190,243 160,244 139,242.5 122,239 96,234.5 74,228.7 56,223 45,212 34,200 25,190.5 21,187" fill="#699b66" />
<g clip-path="url(#ct)">
<polygon points="40,192 60,184 100,180 140,174 165,172 172,184 215,192 255,200 262,214 240,226 200,233 150,229 100,220 62,212" fill="#50a56e" filter="url(#b2)"/>
<polygon points="150,162 185,152 230,157 262,164 262,172 236,168 206,163 189,159 170,166 160,176" fill="#5ca068" filter="url(#b2)"/>
<polygon points="290,240 320,256 360,268 400,274 440,270 480,262 505,256 505,262 470,268 430,274 400,278 370,276 330,268 297,258 280,246" fill="#48a878" filter="url(#b2)"/>
<polygon points="207,208 235,203 264,207 262,215 232,217 210,215" fill="#6c8a74" filter="url(#b1)"/>
<polygon points="226,234 250,230 262,238 256,247 235,247" fill="#6a8278" filter="url(#b1)"/>
<polygon points="262,168 285,170 300,178 312,186 318,182 306,172 285,166" fill="#6d7f78" filter="url(#b1)"/>
<polygon points="100,236 200,245 263,256 330,272 375,280 420,279 420,274 375,274 330,266 263,250 200,240" fill="#6b8a78" fill-opacity=".7" filter="url(#b1)"/>
<polygon points="170,174 176,165 189,162.5 206,166 236,171.5 262,177 279,180.5 292,183.5 305,193 313,201 330,210 345,221 363,244 390,249 430,247 463,249 476,255 473,260 447,265 417,269 390,267 363,263 330,254 307,245 290,232 281,216 268,205 255,198 225,191 210,186 174,182" fill="#2a9cb4" />
<polygon points="170,175 190,176 212,180 212,184 190,183 174,181" fill="#30a486" />
<polygon points="300,236 325,247 362,259 390,264 417,266 417,269 390,267 363,263 330,253 307,243" fill="#30a486" />
<polygon points="178,165 190,163.5 206,166.5 236,172 262,177.5 279,181 292,184.5 304,194 311,202 300,203 285,197 262,191.5 240,186.5 215,180 190,174.5 177,171" fill="#1f7ac8" />
<polygon points="284,211 300,207 322,214 330,223 316,227 297,223 286,217" fill="#2078cc" />
<polygon points="300,203 311,202 322,214 300,207" fill="#2a90c8" />
<polygon points="318,234 345,238.5 365,246.5 392,251 430,249 462,250.5 474,255.5 470,260 446,264 417,267.5 390,266 363,261 335,251" fill="#1f7cca" />
<polygon points="345,250 365,256 392,260 430,260 446,264 417,267.5 390,266 363,261" fill="#2a90cc" />
<polygon points="22,185 25,181.5 31.2,181.1 33,179.5 43.2,179.1 45,177.5 55.2,176.8 57,174.5 67,173.5 76.2,173.1 78,171.5 90,172.5 94.2,172.8 96,174 100,172 112,171.5 120.2,171.1 122,169.5 129.2,169.2 131,168 134,165 138.2,164.3 140,162 146.2,161.1 148,158 155.2,157.1 157,154 165.2,153.3 167,151 173.2,150.3 175,148 183,147 195,147 207,148 218.2,148.4 220,150 231.2,150.6 233,152.5 248.2,153.2 250,155.5 263.2,156.1 265,158 278.2,158.9 280,162 283.2,162.9 285,166 293.2,166.4 295,168 305.2,168.4 307,170 310.2,171.3 312,176 315.2,176.9 317,180 323.2,180.7 325,183 328.2,183.4 330,185 336.2,187.2 338,195 345.2,197.2 347,205 356.2,206.5 358,212 368.2,213.3 370,218 375.2,219.8 377,226 381.2,226.9 383,230 393.2,230.7 395,233 408.2,233.6 410,235.5 415.2,234.9 417,233 428.2,233.7 430,236 443.2,236.7 445,239 455.2,239.3 457,240.5 460.2,239.9 462,238 478.2,238.9 480,242 494.2,242.3 496,243.5 499.2,242.8 501,240.5 512,240 512,266 497,269 475,274 440,278.5 405,281.5 375,280 330,272 297,265 263,256 230,249 200,245 190,243 160,244 139,242.5 122,239 96,234.5 74,228.7 56,223 45,212 34,200 25,190.5 21,187" fill="url(#grid)"/>
</g>
<rect x="127" y="262" width="16.7782" height="27.9662" fill="#60ab92" fill-opacity=".5"/>
<rect x="164.5" y="258.5" width="12.274" height="25.972" fill="#60ab92" fill-opacity=".5"/>
<rect x="194" y="256" width="15.5523" height="21.0367" fill="#60ab92" fill-opacity=".5"/>
<rect x="155.5" y="280" width="9.05289" height="35.0163" fill="#60ab92" fill-opacity=".5"/>
<rect x="177" y="287" width="12.8138" height="33.7037" fill="#60ab92" fill-opacity=".5"/>
<rect x="185.5" y="272" width="12.656" height="26.8284" fill="#60ab92" fill-opacity=".5"/>
<rect x="207" y="283.5" width="13.1482" height="19.1254" fill="#60ab92" fill-opacity=".5"/>
<rect x="214.5" y="273.5" width="9.13351" height="21.0155" fill="#60ab92" fill-opacity=".5"/>
<rect x="223" y="266" width="14.766" height="20.5979" fill="#60ab92" fill-opacity=".5"/>
<rect x="147.5" y="302" width="9.80128" height="35.2219" fill="#60ab92" fill-opacity=".5"/>
<rect x="169" y="311" width="12.3376" height="25.0446" fill="#60ab92" fill-opacity=".5"/>
<rect x="189.5" y="315" width="10.313" height="23.833" fill="#60ab92" fill-opacity=".5"/>
<rect x="197" y="298.5" width="13.6904" height="28.255" fill="#60ab92" fill-opacity=".5"/>
<rect x="159.5" y="330" width="9.97914" height="18.9051" fill="#60ab92" fill-opacity=".5"/>
<rect x="193" y="361" width="16.2433" height="28.6688" fill="#60ab92" fill-opacity=".5"/>
<rect x="223" y="362" width="10.7761" height="24.2665" fill="#60ab92" fill-opacity=".5"/>
<rect x="185.5" y="377" width="17.4877" height="25.2555" fill="#60ab92" fill-opacity=".5"/>
<rect x="155.5" y="385" width="13.3446" height="15.5337" fill="#60ab92" fill-opacity=".5"/>
<rect x="176" y="388.5" width="17.3355" height="19.379" fill="#60ab92" fill-opacity=".5"/>
<rect x="193" y="371" width="17.138" height="16.2034" fill="#60ab92" fill-opacity=".5"/>
<rect x="214.5" y="383.5" width="16.421" height="19.1028" fill="#60ab92" fill-opacity=".5"/>
<rect x="168" y="400" width="16.0724" height="19.7208" fill="#60ab92" fill-opacity=".5"/>
<rect x="159" y="415" width="12.6404" height="18.4635" fill="#60ab92" fill-opacity=".5"/>
<rect x="150.5" y="421" width="16.4627" height="11.8297" fill="#60ab92" fill-opacity=".5"/>
<rect x="206" y="398.5" width="10.9632" height="22.9975" fill="#60ab92" fill-opacity=".5"/>
<rect x="197.5" y="413.5" width="13.661" height="21.3358" fill="#60ab92" fill-opacity=".5"/>
<rect x="189" y="428.5" width="10.1075" height="17.9706" fill="#60ab92" fill-opacity=".5"/>
<rect x="197.5" y="453" width="15.5239" height="32.973" fill="#60ab92" fill-opacity=".5"/>
<rect x="227" y="448.5" width="9.36989" height="34.6234" fill="#60ab92" fill-opacity=".5"/>
<rect x="236" y="433.5" width="15.8172" height="19.3813" fill="#60ab92" fill-opacity=".5"/>
<rect x="244.5" y="422" width="16.5438" height="15.1773" fill="#60ab92" fill-opacity=".5"/>
<rect x="252.5" y="411" width="14.3957" height="20.5005" fill="#60ab92" fill-opacity=".5"/>
<rect x="255.5" y="471" width="14.6434" height="13.0621" fill="#60ab92" fill-opacity=".5"/>
<polygon points="124,261 127,261 127,273 124,275" fill="#6a8c6c" />
<polygon points="161,257.5 164.5,257.5 164.5,275.5 161,277.5" fill="#6a8c6c" />
<polygon points="191,255 194,255 194,268 191,270" fill="#6a8c6c" />
<polygon points="152.5,279 155.5,279 155.5,299 152.5,301" fill="#6a8c6c" />
<polygon points="174,286 177,286 177,305.5 174,307.5" fill="#6a8c6c" />
<polygon points="182.5,271 185.5,271 185.5,283 182.5,285" fill="#6a8c6c" />
<polygon points="204,282.5 207,282.5 207,294 204,296" fill="#6a8c6c" />
<polygon points="212,272.5 214.5,272.5 214.5,282 212,284" fill="#6a8c6c" />
<polygon points="220,265 223,265 223,270.5 220,272.5" fill="#6a8c6c" />
<polygon points="144,301 147.5,301 147.5,324 144,326" fill="#6a8c6c" />
<polygon points="165,310 169,310 169,324 165,326" fill="#6a8c6c" />
<polygon points="186,314 189.5,314 189.5,329 186,331" fill="#6a8c6c" />
<polygon points="194,297.5 197,297.5 197,310.5 194,312.5" fill="#6a8c6c" />
<polygon points="156,329 159.5,329 159.5,337 156,339" fill="#6a8c6c" />
<polygon points="190,360 193,360 193,373 190,375" fill="#6a8c6c" />
<polygon points="220,361 223,361 223,378 220,380" fill="#6a8c6c" />
<polygon points="182.5,376 185.5,376 185.5,385.5 182.5,387.5" fill="#6a8c6c" />
<polygon points="150,384 155.5,384 155.5,393 150,395" fill="#6a8c6c" />
<polygon points="172.5,387.5 176,387.5 176,397 172.5,399" fill="#6a8c6c" />
<polygon points="190,370 193,370 193,374 190,376" fill="#6a8c6c" />
<polygon points="211,382.5 214.5,382.5 214.5,394 211,396" fill="#6a8c6c" />
<polygon points="165,399 168,399 168,410.5 165,412.5" fill="#6a8c6c" />
<polygon points="156,414 159,414 159,418 156,420" fill="#6a8c6c" />
<polygon points="148,420 150.5,420 150.5,424 148,426" fill="#6a8c6c" />
<polygon points="203,397.5 206,397.5 206,410.5 203,412.5" fill="#6a8c6c" />
<polygon points="194,412.5 197.5,412.5 197.5,424 194,426" fill="#6a8c6c" />
<polygon points="186,427.5 189,427.5 189,437 186,439" fill="#6a8c6c" />
<polygon points="194,452 197.5,452 197.5,470 194,472" fill="#6a8c6c" />
<polygon points="224,447.5 227,447.5 227,470.5 224,472.5" fill="#6a8c6c" />
<polygon points="232.5,432.5 236,432.5 236,445.5 232.5,447.5" fill="#6a8c6c" />
<polygon points="241,421 244.5,421 244.5,429 241,431" fill="#6a8c6c" />
<polygon points="249,410 252.5,410 252.5,419 249,421" fill="#6a8c6c" />
<polygon points="252.5,470 255.5,470 255.5,474 252.5,476" fill="#6a8c6c" />
<rect x="107.5" y="296" width="10" height="5" fill="#869a6c" />
<rect x="120" y="385" width="32" height="5" fill="#869a6c" />
<rect x="140" y="457.5" width="19" height="8" fill="#869a6c" />
<rect x="157.5" y="465" width="10" height="6" fill="#869a6c" />
<rect x="119" y="454" width="6" height="3.5" fill="#869a6c" />
<rect x="177.5" y="439" width="9" height="4" fill="#869a6c" />
<rect x="182" y="443" width="7" height="9" fill="#869a6c" />
<rect x="186" y="452" width="9" height="5" fill="#869a6c" />
<path d="M156.271 254.277h2.6v4z" fill="#58785e"/>
<path d="M157.138 255.209h2.6v4z" fill="#58785e"/>
<path d="M160.359 252.627h2.6v4z" fill="#58785e"/>
<path d="M95.5764 253.498h2.6v4z" fill="#58785e"/>
<path d="M166.894 250.321h2.6v4z" fill="#58785e"/>
<path d="M208.825 257.696h2.6v4z" fill="#58785e"/>
<path d="M162.118 249.557h2.6v4z" fill="#58785e"/>
<path d="M164.402 248.733h2.6v4z" fill="#58785e"/>
<path d="M111.654 251.56h2.6v4z" fill="#58785e"/>
<path d="M106.032 251.584h2.6v4z" fill="#58785e"/>
<path d="M170.055 248.05h2.6v4z" fill="#58785e"/>
<path d="M189.375 248.934h2.6v4z" fill="#58785e"/>
<path d="M204.222 257.576h2.6v4z" fill="#58785e"/>
<path d="M170.257 248.216h2.6v4z" fill="#58785e"/>
<path d="M169.1 252.076h2.6v4z" fill="#58785e"/>
<path d="M237.483 250.544h2.6v4z" fill="#58785e"/>
<path d="M223.132 260.576h2.6v4z" fill="#58785e"/>
<path d="M204.009 258.02h2.6v4z" fill="#58785e"/>
<path d="M121.637 258.373h2.6v4z" fill="#58785e"/>
<path d="M167.256 258.985h2.6v4z" fill="#58785e"/>
<path d="M232.154 250.784h2.6v4z" fill="#58785e"/>
<path d="M212.622 259.579h2.6v4z" fill="#58785e"/>
<path d="M102.024 250.411h2.6v4z" fill="#58785e"/>
<path d="M207.696 250.219h2.6v4z" fill="#58785e"/>
<path d="M229.17 252.043h2.6v4z" fill="#58785e"/>
<path d="M216.791 250.219h2.6v4z" fill="#58785e"/>
<path d="M168.839 258.576h2.6v4z" fill="#58785e"/>
<path d="M169.419 251.377h2.6v4z" fill="#58785e"/>
<path d="M116.668 257.73h2.6v4z" fill="#58785e"/>
<path d="M195.991 258.825h2.6v4z" fill="#58785e"/>
<path d="M117.818 255.935h2.6v4z" fill="#58785e"/>
<path d="M109.607 252.721h2.6v4z" fill="#58785e"/>
<path d="M189.357 252.264h2.6v4z" fill="#58785e"/>
<path d="M225.562 255.333h2.6v4z" fill="#58785e"/>
<path d="M180.747 258.365h2.6v4z" fill="#58785e"/>
<path d="M108.005 258.236h2.6v4z" fill="#58785e"/>
<path d="M188.356 252.658h2.6v4z" fill="#58785e"/>
<path d="M214.044 251.618h2.6v4z" fill="#58785e"/>
<path d="M243.546 255.959h2.6v4z" fill="#58785e"/>
<path d="M147.118 256.278h2.6v4z" fill="#58785e"/>
<path d="M159.669 249.474h2.6v4z" fill="#58785e"/>
<path d="M205.77 248.855h2.6v4z" fill="#58785e"/>
<path d="M217.433 251.552h2.6v4z" fill="#58785e"/>
<path d="M189.803 259.765h2.6v4z" fill="#58785e"/>
<path d="M181.638 255.757h2.6v4z" fill="#58785e"/>
<path d="M186.256 253.072h2.6v4z" fill="#58785e"/>
<path d="M170.44 258.315h2.6v4z" fill="#58785e"/>
<path d="M191.926 248.266h2.6v4z" fill="#58785e"/>
<path d="M92.4002 250.268h2.6v4z" fill="#58785e"/>
<path d="M108.273 250.611h2.6v4z" fill="#58785e"/>
<path d="M126.312 253.689h2.6v4z" fill="#58785e"/>
<path d="M182.131 250.253h2.6v4z" fill="#58785e"/>
<path d="M187.461 253.608h2.6v4z" fill="#58785e"/>
<path d="M112.617 257.651h2.6v4z" fill="#58785e"/>
<path d="M106.658 253.952h2.6v4z" fill="#58785e"/>
<path d="M225.307 258.052h2.6v4z" fill="#58785e"/>
<path d="M153.499 250.401h2.6v4z" fill="#58785e"/>
<path d="M93.7589 253.775h2.6v4z" fill="#58785e"/>
<path d="M178.037 251.925h2.6v4z" fill="#58785e"/>
<path d="M190.777 253.301h2.6v4z" fill="#58785e"/>
<path d="M235.385 257.67h2.6v4z" fill="#58785e"/>
<path d="M130.02 257.602h2.6v4z" fill="#58785e"/>
<path d="M98.7323 252.513h2.6v4z" fill="#58785e"/>
<path d="M154.116 250.094h2.6v4z" fill="#58785e"/>
<path d="M100.932 255.525h2.6v4z" fill="#58785e"/>
<path d="M93.8896 252.649h2.6v4z" fill="#58785e"/>
<path d="M235.961 250.586h2.6v4z" fill="#58785e"/>
<path d="M122.526 253.908h2.6v4z" fill="#58785e"/>
<path d="M169.563 255.25h2.6v4z" fill="#58785e"/>
<path d="M216.447 250.585h2.6v4z" fill="#58785e"/>
<path d="M139.336 250.55h2.6v4z" fill="#58785e"/>
<path d="M99.4191 256.821h2.6v4z" fill="#58785e"/>
<path d="M211.795 256.981h2.6v4z" fill="#58785e"/>
<path d="M92.9715 256.153h2.6v4z" fill="#58785e"/>
<path d="M206.014 253.863h2.6v4z" fill="#58785e"/>
<path d="M205.489 253.7h2.6v4z" fill="#58785e"/>
<path d="M143.334 256.023h2.6v4z" fill="#58785e"/>
<path d="M198.352 258.271h2.6v4z" fill="#58785e"/>
<path d="M200.888 251.37h2.6v4z" fill="#58785e"/>
<path d="M176.73 252.927h2.6v4z" fill="#58785e"/>
<path d="M212.633 254.692h2.6v4z" fill="#58785e"/>
<path d="M132.59 254.516h2.6v4z" fill="#58785e"/>
<path d="M239.667 251.557h2.6v4z" fill="#58785e"/>
<path d="M226.647 248.876h2.6v4z" fill="#58785e"/>
<path d="M205.813 259.613h2.6v4z" fill="#58785e"/>
<path d="M206.161 252.206h2.6v4z" fill="#58785e"/>
<path d="M457.385 272.268h3.4462v5.74366z" fill="#5c7c62"/>
<path d="M472.181 271.727h3.76094v6.26823z" fill="#5c7c62"/>
<path d="M480.139 272.783h3.93023v6.55039z" fill="#5c7c62"/>
<path d="M493.714 271.411h4.21901v7.03169z" fill="#5c7c62"/>
<path d="M392.633 278.924h2.06874v3.4479z" fill="#5c7c62"/>
<path d="M401.34 277.541h2.25395v3.75659z" fill="#5c7c62"/>
<path d="M430.394 278.864h2.87203v4.78671z" fill="#5c7c62"/>
<path d="M439.088 277.767h3.05696v5.09493z" fill="#5c7c62"/>
<path d="M446.099 278.197h3.20611v5.34351z" fill="#5c7c62"/>
<path d="M461.094 278.774h3.5251v5.87516z" fill="#5c7c62"/>
<path d="M467.911 278.003h3.67011v6.11685z" fill="#5c7c62"/>
<path d="M482.25 277.612h3.97514v6.62524z" fill="#5c7c62"/>
<path d="M491.502 278.202h4.17196v6.95327z" fill="#5c7c62"/>
<path d="M498.968 277.667h4.33077v7.21795z" fill="#5c7c62"/>
<path d="M403.892 284.676h2.30826v3.84709z" fill="#5c7c62"/>
<path d="M411.413 284.177h2.46824v4.11373z" fill="#5c7c62"/>
<path d="M433.784 284.607h2.94412v4.90687z" fill="#5c7c62"/>
<path d="M442.482 285.216h3.12916v5.21527z" fill="#5c7c62"/>
<path d="M449.648 284.898h3.2816v5.46934z" fill="#5c7c62"/>
<path d="M472.359 284.683h3.76473v6.27455z" fill="#5c7c62"/>
<path d="M479.126 284.657h3.90868v6.51447z" fill="#5c7c62"/>
<path d="M486.839 284.965h4.07276v6.78793z" fill="#5c7c62"/>
<path d="M494.759 283.9h4.24124v7.06874z" fill="#5c7c62"/>
<path d="M408.597 290.304h2.40833v4.01388z" fill="#5c7c62"/>
<path d="M430.484 290.024h2.87393v4.78988z" fill="#5c7c62"/>
<path d="M445.638 290.724h3.19631v5.32718z" fill="#5c7c62"/>
<path d="M454.128 290.306h3.3769v5.62816z" fill="#5c7c62"/>
<path d="M461.337 291.232h3.53027v5.88378z" fill="#5c7c62"/>
<path d="M467.789 290.697h3.6675v6.11251z" fill="#5c7c62"/>
<path d="M482.735 290.352h3.98545v6.64242z" fill="#5c7c62"/>
<path d="M490.552 289.972h4.15175v6.91958z" fill="#5c7c62"/>
<path d="M498.644 290.162h4.32387v7.20645z" fill="#5c7c62"/>
<path d="M412.11 296.329h2.48307v4.13845z" fill="#5c7c62"/>
<path d="M418.779 296.786h2.62493v4.37488z" fill="#5c7c62"/>
<path d="M441.013 297.482h3.09792v5.1632z" fill="#5c7c62"/>
<path d="M463.651 297.074h3.57948v5.9658z" fill="#5c7c62"/>
<path d="M471.057 297.019h3.73703v6.22839z" fill="#5c7c62"/>
<path d="M493.568 297.236h4.2159v7.02649z" fill="#5c7c62"/>
<path d="M370.97 303.568h1.8v3z" fill="#5c7c62"/>
<path d="M384.799 302.601h1.9021v3.17016z" fill="#5c7c62"/>
<path d="M431.225 302.203h2.8897v4.81617z" fill="#5c7c62"/>
<path d="M453.773 303.124h3.36935v5.61559z" fill="#5c7c62"/>
<path d="M460.304 302.844h3.50829v5.84714z" fill="#5c7c62"/>
<path d="M474.809 303.135h3.81685v6.36142z" fill="#5c7c62"/>
<path d="M482.438 303.621h3.97913v6.63188z" fill="#5c7c62"/>
<path d="M491.537 302.893h4.1727v6.9545z" fill="#5c7c62"/>
<path d="M426.29 309.795h2.78471v4.64118z" fill="#5c7c62"/>
<path d="M434.79 309.459h2.96553v4.94255z" fill="#5c7c62"/>
<path d="M450.069 309.334h3.29056v5.48427z" fill="#5c7c62"/>
<path d="M456.121 310.148h3.41931v5.69885z" fill="#5c7c62"/>
<path d="M465.155 308.864h3.61148v6.01913z" fill="#5c7c62"/>
<path d="M472.955 309.863h3.7774v6.29567z" fill="#5c7c62"/>
<path d="M486.753 309.57h4.07093v6.78489z" fill="#5c7c62"/>
<path d="M495.292 309.815h4.25258v7.08763z" fill="#5c7c62"/>
<path d="M386.283 315.319h1.93366v3.22277z" fill="#5c7c62"/>
<path d="M415.078 314.785h2.54621v4.24369z" fill="#5c7c62"/>
<path d="M430.505 315.434h2.87438v4.79063z" fill="#5c7c62"/>
<path d="M437.289 316.394h3.0187v5.03116z" fill="#5c7c62"/>
<path d="M452.512 315.594h3.34253v5.57089z" fill="#5c7c62"/>
<path d="M460.739 314.441h3.51754v5.86256z" fill="#5c7c62"/>
<path d="M469.181 316.132h3.69712v6.16187z" fill="#5c7c62"/>
<path d="M475.834 314.923h3.83866v6.39776z" fill="#5c7c62"/>
<path d="M483.052 316.293h3.99219v6.65366z" fill="#5c7c62"/>
<path d="M491.338 316.327h4.16846v6.94743z" fill="#5c7c62"/>
<path d="M497.276 314.802h4.29477v7.15796z" fill="#5c7c62"/>
<path d="M389.793 322.571h2.00833v3.34722z" fill="#5c7c62"/>
<path d="M412.516 320.811h2.4917v4.15283z" fill="#5c7c62"/>
<path d="M426.337 321.077h2.78572v4.64286z" fill="#5c7c62"/>
<path d="M457.777 320.88h3.45454v5.75756z" fill="#5c7c62"/>
<path d="M472.257 321.505h3.76255v6.27092z" fill="#5c7c62"/>
<path d="M480.146 321.555h3.93038v6.55064z" fill="#5c7c62"/>
<path d="M486.286 321.043h4.06098v6.76831z" fill="#5c7c62"/>
<path d="M494.927 321.707h4.24482v7.0747z" fill="#5c7c62"/>
<path d="M377.779 328.592h1.8v3z" fill="#5c7c62"/>
<path d="M431.123 327.193h2.88753v4.81255z" fill="#5c7c62"/>
<path d="M437.375 328.017h3.02052v5.0342z" fill="#5c7c62"/>
<path d="M445.248 327.212h3.188v5.31333z" fill="#5c7c62"/>
<path d="M453.616 328.423h3.366v5.61z" fill="#5c7c62"/>
<path d="M460.105 326.931h3.50404v5.84007z" fill="#5c7c62"/>
<path d="M468.016 328.243h3.67235v6.12058z" fill="#5c7c62"/>
<path d="M476.321 327.47h3.84902v6.41503z" fill="#5c7c62"/>
<path d="M483.929 327.786h4.01085v6.68476z" fill="#5c7c62"/>
<path d="M497.733 327.172h4.30449v7.17415z" fill="#5c7c62"/>
<path d="M381.501 334.634h1.83193v3.05321z" fill="#5c7c62"/>
<path d="M404.546 334.405h2.32216v3.87026z" fill="#5c7c62"/>
<path d="M412.739 334.434h2.49645v4.16075z" fill="#5c7c62"/>
<path d="M426.559 333.244h2.79044v4.65074z" fill="#5c7c62"/>
<path d="M472.554 333.677h3.76887v6.28145z" fill="#5c7c62"/>
<path d="M487.609 334.826h4.08913v6.81522z" fill="#5c7c62"/>
<path d="M495.195 333.107h4.25052v7.0842z" fill="#5c7c62"/>
<path d="M415.768 339.497h2.56088v4.26813z" fill="#5c7c62"/>
<path d="M422.463 339.787h2.7033v4.5055z" fill="#5c7c62"/>
<path d="M430.277 339.687h2.86952v4.78253z" fill="#5c7c62"/>
<path d="M445.84 340.501h3.2006v5.33434z" fill="#5c7c62"/>
<path d="M453.621 340.122h3.36611v5.61019z" fill="#5c7c62"/>
<path d="M460.926 340.138h3.52151v5.86918z" fill="#5c7c62"/>
<path d="M467.685 339.643h3.66529v6.10881z" fill="#5c7c62"/>
<path d="M475.466 340.371h3.83083v6.38472z" fill="#5c7c62"/>
<path d="M482.905 340.924h3.98908v6.64846z" fill="#5c7c62"/>
<path d="M490.813 340.183h4.1573v6.92884z" fill="#5c7c62"/>
<path d="M442.699 346.399h3.13378v5.22297z" fill="#5c7c62"/>
<path d="M448.868 346.008h3.26502v5.4417z" fill="#5c7c62"/>
<path d="M457.151 346.563h3.44121v5.73535z" fill="#5c7c62"/>
<path d="M465.34 346.048h3.61542v6.0257z" fill="#5c7c62"/>
<path d="M472.676 347.318h3.77148v6.2858z" fill="#5c7c62"/>
<path d="M479.353 347.221h3.91351v6.52251z" fill="#5c7c62"/>
<path d="M486.095 346.53h4.05693v6.76155z" fill="#5c7c62"/>
<path d="M495.341 346.947h4.25361v7.08935z" fill="#5c7c62"/>
<path d="M408.976 352.442h2.4164v4.02734z" fill="#5c7c62"/>
<path d="M438.473 351.685h3.04388v5.07313z" fill="#5c7c62"/>
<path d="M460.872 352.936h3.52038v5.86729z" fill="#5c7c62"/>
<path d="M468.196 352.706h3.67616v6.12694z" fill="#5c7c62"/>
<path d="M483.349 352.422h3.99851v6.66419z" fill="#5c7c62"/>
<path d="M490.014 353.119h4.14029v6.90048z" fill="#5c7c62"/>
<path d="M497.4 351.941h4.29742v7.16237z" fill="#5c7c62"/>
<path d="M412.437 358.243h2.49002v4.15004z" fill="#5c7c62"/>
<path d="M426.487 358.147h2.7889v4.64817z" fill="#5c7c62"/>
<path d="M433.873 359.743h2.94603v4.91005z" fill="#5c7c62"/>
<path d="M442.123 358.03h3.12153v5.20255z" fill="#5c7c62"/>
<path d="M449.271 358.606h3.27359v5.45598z" fill="#5c7c62"/>
<path d="M456.247 359.452h3.42197v5.70329z" fill="#5c7c62"/>
<path d="M463.99 358.182h3.58669v5.97782z" fill="#5c7c62"/>
<path d="M471.474 357.87h3.74591v6.24318z" fill="#5c7c62"/>
<path d="M479.183 358.112h3.90989v6.51648z" fill="#5c7c62"/>
<path d="M486.185 358.339h4.05885v6.76475z" fill="#5c7c62"/>
<path d="M493.756 358.687h4.21989v7.03315z" fill="#5c7c62"/>
<path d="M423.201 364.594h2.719v4.53166z" fill="#5c7c62"/>
<path d="M430.323 364.453h2.8705v4.78416z" fill="#5c7c62"/>
<path d="M438.633 364.565h3.04729v5.07882z" fill="#5c7c62"/>
<path d="M453.923 364.264h3.37253v5.62089z" fill="#5c7c62"/>
<path d="M459.759 365.359h3.49669v5.82782z" fill="#5c7c62"/>
<path d="M467.903 364.825h3.66993v6.11656z" fill="#5c7c62"/>
<path d="M476.098 364.497h3.84428v6.40713z" fill="#5c7c62"/>
<path d="M482.904 365.258h3.98905v6.64842z" fill="#5c7c62"/>
<path d="M489.93 365.825h4.13852v6.89753z" fill="#5c7c62"/>
<path d="M434.756 371.106h2.96481v4.94136z" fill="#5c7c62"/>
<path d="M472.275 371.288h3.76294v6.27157z" fill="#5c7c62"/>
<path d="M478.619 370.916h3.89789v6.49648z" fill="#5c7c62"/>
<path d="M486.403 370.821h4.06348v6.77246z" fill="#5c7c62"/>
<path d="M494.914 371.541h4.24453v7.07422z" fill="#5c7c62"/>
<path d="M460.203 376.892h3.50613v5.84355z" fill="#5c7c62"/>
<path d="M483.891 378.253h4.01005v6.68342z" fill="#5c7c62"/>
<path d="M442.127 383.296h3.12161v5.20268z" fill="#5c7c62"/>
<path d="M424.181 390.243h2.73986v4.56643z" fill="#5c7c62"/>
<path d="M431.36 389.584h2.89258v4.82096z" fill="#5c7c62"/>
<path d="M444.974 390.352h3.18217v5.30361z" fill="#5c7c62"/>
<path d="M452.674 389.545h3.34597v5.57662z" fill="#5c7c62"/>
<path d="M460.889 389.226h3.52072v5.86787z" fill="#5c7c62"/>
<path d="M484.035 390.542h4.01311v6.68851z" fill="#5c7c62"/>
<path d="M442.746 396.222h3.13478v5.22463z" fill="#5c7c62"/>
<path d="M457.178 395.087h3.4418v5.73633z" fill="#5c7c62"/>
<path d="M471.776 395.707h3.75232v6.25387z" fill="#5c7c62"/>
<path d="M479.658 395.668h3.92v6.53334z" fill="#5c7c62"/>
<path d="M486.919 396.973h4.07445v6.79076z" fill="#5c7c62"/>
<path d="M493.792 396.342h4.22066v7.03443z" fill="#5c7c62"/>
<path d="M430.305 401.538h2.87012v4.78353z" fill="#5c7c62"/>
<path d="M445.803 403.075h3.1998v5.333z" fill="#5c7c62"/>
<path d="M454.042 402.367h3.37508v5.62514z" fill="#5c7c62"/>
<path d="M467.914 402.749h3.67017v6.11695z" fill="#5c7c62"/>
<path d="M476.437 401.335h3.85147v6.41912z" fill="#5c7c62"/>
<path d="M483.998 401.752h4.01233v6.68721z" fill="#5c7c62"/>
<path d="M489.746 401.529h4.1346v6.891z" fill="#5c7c62"/>
<path d="M412.128 409.375h2.48346v4.13909z" fill="#5c7c62"/>
<path d="M426.187 407.712h2.78252v4.63754z" fill="#5c7c62"/>
<path d="M456.662 408.882h3.4308v5.718z" fill="#5c7c62"/>
<path d="M479.406 407.957h3.91464v6.52441z" fill="#5c7c62"/>
<path d="M487.882 407.664h4.09494v6.8249z" fill="#5c7c62"/>
<path d="M423.454 414.048h2.72439v4.54065z" fill="#5c7c62"/>
<path d="M430.225 414.468h2.86842v4.78069z" fill="#5c7c62"/>
<path d="M445.297 415.589h3.18904v5.31507z" fill="#5c7c62"/>
<path d="M468.846 414.165h3.68999v6.14998z" fill="#5c7c62"/>
<path d="M475.671 415.382h3.83519v6.39198z" fill="#5c7c62"/>
<path d="M483.566 414.795h4.00312v6.67187z" fill="#5c7c62"/>
<path d="M490.858 415.366h4.15826v6.93044z" fill="#5c7c62"/>
<path d="M418.858 421.171h2.62661v4.37769z" fill="#5c7c62"/>
<path d="M427.476 420.801h2.80995v4.68325z" fill="#5c7c62"/>
<path d="M450.266 421.263h3.29476v5.49126z" fill="#5c7c62"/>
<path d="M456.354 420.329h3.42427v5.70711z" fill="#5c7c62"/>
<path d="M463.586 420.818h3.57811v5.96352z" fill="#5c7c62"/>
<path d="M472.113 420.525h3.7595v6.26583z" fill="#5c7c62"/>
<path d="M479.876 421.106h3.92464v6.54107z" fill="#5c7c62"/>
<path d="M495.248 421.236h4.25164v7.08607z" fill="#5c7c62"/>
<path d="M437.647 427.225h3.0263v5.04383z" fill="#5c7c62"/>
<path d="M453.244 426.953h3.3581v5.59684z" fill="#5c7c62"/>
<path d="M491.488 427.736h4.17165v6.95276z" fill="#5c7c62"/>
<path d="M427.236 432.943h2.80483v4.67472z" fill="#5c7c62"/>
<path d="M450.122 432.905h3.29168v5.48613z" fill="#5c7c62"/>
<path d="M457.157 434.05h3.44135v5.73558z" fill="#5c7c62"/>
<path d="M465.443 433.624h3.6176v6.02933z" fill="#5c7c62"/>
<path d="M472.331 432.859h3.76414v6.27356z" fill="#5c7c62"/>
<path d="M480.012 432.959h3.92753v6.54588z" fill="#5c7c62"/>
<path d="M422.869 439.436h2.71193v4.51989z" fill="#5c7c62"/>
<path d="M431.677 438.949h2.89932v4.8322z" fill="#5c7c62"/>
<path d="M461.304 440.113h3.52956v5.88259z" fill="#5c7c62"/>
<path d="M467.604 438.504h3.66358v6.10596z" fill="#5c7c62"/>
<path d="M475.448 439.328h3.83043v6.38405z" fill="#5c7c62"/>
<path d="M441.084 446.272h3.09941v5.16569z" fill="#5c7c62"/>
<path d="M448.965 445.764h3.26708v5.44513z" fill="#5c7c62"/>
<path d="M464.149 446.283h3.59007v5.98346z" fill="#5c7c62"/>
<path d="M472.599 446.56h3.76983v6.28305z" fill="#5c7c62"/>
<path d="M415.195 452.285h2.54869v4.24782z" fill="#5c7c62"/>
<path d="M423.775 451.396h2.73122v4.55204z" fill="#5c7c62"/>
<path d="M444.767 451.827h3.17778v5.2963z" fill="#5c7c62"/>
<path d="M419.698 458.966h2.64449v4.40749z" fill="#5c7c62"/>
<path d="M449.324 457.814h3.27471v5.45785z" fill="#5c7c62"/>
<path d="M463.802 457.689h3.58271v5.97118z" fill="#5c7c62"/>
<path d="M471.396 457.439h3.74425v6.24042z" fill="#5c7c62"/>
<path d="M446.352 464.012h3.21148v5.35246z" fill="#5c7c62"/>
<path d="M453.505 464.873h3.36365v5.60608z" fill="#5c7c62"/>
<path d="M467.209 464.178h3.65517v6.09196z" fill="#5c7c62"/>
<path d="M474.921 464.825h3.81923v6.36539z" fill="#5c7c62"/>
<path d="M427.788 470.733h2.81657v4.69429z" fill="#5c7c62"/>
<path d="M457.814 470.396h3.45532v5.75887z" fill="#5c7c62"/>
<path d="M472.367 470.515h3.7649v6.27483z" fill="#5c7c62"/>
<path d="M407.541 476.224h2.38588v3.97647z" fill="#5c7c62"/>
<path d="M431.587 475.995h2.89741v4.82901z" fill="#5c7c62"/>
<path d="M438.077 475.817h3.03545v5.05908z" fill="#5c7c62"/>
<path d="M468.757 476.23h3.68811v6.14685z" fill="#5c7c62"/>
<path d="M434.307 482.947h2.95527v4.92544z" fill="#5c7c62"/>
<path d="M407.261 489.556h2.37992v3.96653z" fill="#5c7c62"/>
<path d="M415.709 488.848h2.55964v4.26606z" fill="#5c7c62"/>
<path d="M446.308 489.923h3.21056v5.35093z" fill="#5c7c62"/>
<path d="M468.617 488.909h3.68512v6.14187z" fill="#5c7c62"/>
<path d="M420.144 494.457h2.65397v4.42328z" fill="#5c7c62"/>
<path d="M427.127 495.216h2.80252v4.67086z" fill="#5c7c62"/>
<path d="M449.373 495.665h3.27576v5.45961z" fill="#5c7c62"/>
<path d="M457.624 495.883h3.45127v5.75211z" fill="#5c7c62"/>
<path d="M446.305 500.476h3.2105v5.35083z" fill="#5c7c62"/>
<path d="M452.681 502.261h3.34612v5.57687z" fill="#5c7c62"/>
</g>
<polygon points="22,185 25,181.5 31.2,181.1 33,179.5 43.2,179.1 45,177.5 55.2,176.8 57,174.5 67,173.5 76.2,173.1 78,171.5 90,172.5 94.2,172.8 96,174 100,172 112,171.5 120.2,171.1 122,169.5 129.2,169.2 131,168 134,165 138.2,164.3 140,162 146.2,161.1 148,158 155.2,157.1 157,154 165.2,153.3 167,151 173.2,150.3 175,148 183,147 195,147 207,148 218.2,148.4 220,150 231.2,150.6 233,152.5 248.2,153.2 250,155.5 263.2,156.1 265,158 278.2,158.9 280,162 283.2,162.9 285,166 293.2,166.4 295,168 305.2,168.4 307,170 310.2,171.3 312,176 315.2,176.9 317,180 323.2,180.7 325,183 328.2,183.4 330,185 336.2,187.2 338,195 345.2,197.2 347,205 356.2,206.5 358,212 368.2,213.3 370,218 375.2,219.8 377,226 381.2,226.9 383,230 393.2,230.7 395,233 408.2,233.6 410,235.5 415.2,234.9 417,233 428.2,233.7 430,236 443.2,236.7 445,239 455.2,239.3 457,240.5 460.2,239.9 462,238 478.2,238.9 480,242 494.2,242.3 496,243.5 499.2,242.8 501,240.5 512,240 512,340 505,340 500,348 495,352 492,355 487,357 487,360 493,362 495,390 494.5,423 490,434 482,438 480,441 478,455 473,463 472,474 463,481 462,490 462.5,497 465,500 464.5,512 445,510 442,511 433,512.5 430,516 410,512.5 400,510 375,506 344,499 341,495 312.5,489 311,485 300,482.5 280,479.5 253,475 228,472 223,473 197,472 190,473 168,468 160,472 140,467 117,460 109,452 107,443 107,417 102,400 97,387 97,373 102,355 112,350 100,343 95,320 93,310 100,290 99,267 91,265 68,260 63,262 45,260 42,255 25,252 23,248 16,244 16,224 20,220 20,190" fill="none" stroke="#28b8f4" stroke-width="1.800" stroke-linejoin="round"/>
<!--ENDSCENE-->
</svg>

<div id="dlg">
  <div id="tbar">
    <div class="inactive"></div>
    <svg class="abs" style="left:6px;top:2px" width="15" height="16" viewBox="0 0 15 16">
      <path d="M2.5 1.5h6.500l3.500 3.500v9.500h-10z" fill="#f6f8fa" stroke="#5a5d60" stroke-width="1"/>
      <path d="M9 1.5v3.500h3.500" fill="none" stroke="#5a5d60" stroke-width="1"/>
      <circle cx="5.200" cy="5" r="2" fill="#dfe3e6" stroke="#55585b" stroke-width=".9"/>
      <path d="M5.200 5V3l1.600 1z" fill="#3a3d40"/>
      <rect x="1" y="8.500" width="2.200" height="6" fill="#5a9fc8"/>
      <rect x="3.600" y="10" width="2.200" height="4.500" fill="#2c5f86"/>
      <rect x="6.200" y="8.500" width="1.800" height="6" fill="#8cc3e2"/>
      <rect x="8.400" y="7" width="1.800" height="7.500" fill="#4d97c4"/>
      <rect x="10.600" y="8" width="1.700" height="6.500" fill="#3d86b6"/>
      <path d="M1.500 9l3-1.500 2 1.500 3-3 3 1.500" fill="none" stroke="#2f73a6" stroke-width="1.100"/>
    </svg>
    <div id="ttl">Block Model Basic Statistics Report.1</div>
    <svg class="abs" style="left:294px;top:3px" width="32" height="14" viewBox="0 0 32 14">
      <rect x="1" y="8.500" width="9.500" height="1.900" fill="#6d7074"/>
      <path d="M19.800 1.500l9.400 9.400M29.200 1.500l-9.400 9.400" stroke="#6d7074" stroke-width="1.900" fill="none"/>
    </svg>
  </div>
  <div id="panel">
    <div id="hdr"><span>Block Model Statistics Report</span></div>

    <div class="lbl" style="top:74px">Earth Volume Measure Set</div>
    <svg class="abs" style="left:20px;top:98px" width="16" height="16" viewBox="0 0 16 16"><circle cx="7" cy="8" r="6.800" fill="#3c91cd"/><circle cx="7" cy="8" r="2.800" fill="#fff"/></svg>
    <div class="lbl" style="left:44px;top:99px;color:#333">New Set</div>
    <svg class="abs" style="left:176px;top:98px" width="16" height="16" viewBox="0 0 16 16"><circle cx="7" cy="8" r="6.300" fill="#f5f6f7" stroke="#a9acaf" stroke-width="1"/></svg>
    <div class="lbl" style="left:200px;top:99px;color:#333">Existing Set</div>

    <div class="abs" style="left:20px;top:128px;width:278px;height:27px;box-sizing:border-box;border:1px solid #b7babd;border-radius:3px;background:#eef0f2;"></div>
    <div class="lbl" style="left:106px;top:134px;color:#222">Input</div>
    <div class="abs" style="left:98px;top:152px;width:44px;height:3px;background:#2e7fc0"></div>
    <div class="lbl" style="left:159px;top:134px;color:#666b70">Advanced</div>

    <div class="lbl" style="top:181px">Report Name<span class="req">*</span></div>
    <div class="inp" style="left:20px;top:201px;width:278px">Block Model Basic Statistics Report.Nickel</div>

    <div class="lbl" style="top:241px">Block Model<span class="req">*</span></div>
    <div class="pick" style="top:266px"><svg width="22" height="22" viewBox="0 0 22 22"><path d="M4.500 4l0 12 3.200-3.100 2.400 4.600 2.100-1.100-2.400-4.500 4.500 0z" fill="#2a2a2a"/><rect x="12.5" y="13.5" width="5.500" height="4.500" fill="#f6f6f6" stroke="#444" stroke-width="1"/></svg></div>
    <div class="inp" style="left:54px;top:266px;width:244px">Repref Menkar Resource Model A</div>

    <div class="lbl" style="top:311px">Geoscience Filter</div>
    <div class="pick" style="top:336px"><svg width="22" height="22" viewBox="0 0 22 22"><path d="M4.500 4l0 12 3.200-3.100 2.400 4.600 2.100-1.100-2.400-4.500 4.500 0z" fill="#2a2a2a"/><rect x="12.5" y="13.5" width="5.500" height="4.500" fill="#f6f6f6" stroke="#444" stroke-width="1"/></svg></div>
    <div class="inp" style="left:54px;top:336px;width:244px">Mineralized Nickel</div>

    <div class="lbl" style="top:381px">Report by Attribute Data<span class="req">*</span></div>
    <div class="abs" style="left:20px;top:401px;width:278px;height:46px;box-sizing:border-box;background:#fff;border:1px solid #b3b6b9;border-radius:3px;"></div>
    <div class="chip" style="left:24px;top:404px;width:87px"><div class="t" style="width:62px">Nickel %</div><svg style="left:68px" width="11" height="11" viewBox="0 0 11 11"><path d="M1.2 1.2l8.6 8.6M9.800 1.2l-8.6 8.600" stroke="#555" stroke-width="1.8"/></svg></div>
    <div class="chip" style="left:114px;top:404px;width:94px"><div class="t" style="width:68px">Copper %</div><svg style="left:74px" width="11" height="11" viewBox="0 0 11 11"><path d="M1.2 1.2l8.6 8.6M9.800 1.2l-8.6 8.600" stroke="#555" stroke-width="1.8"/></svg></div>
    <div class="chip" style="left:24px;top:426px;width:90px"><div class="t" style="width:64px">Cobalt %</div><svg style="left:71px" width="11" height="11" viewBox="0 0 11 11"><path d="M1.2 1.2l8.6 8.6M9.800 1.2l-8.6 8.600" stroke="#555" stroke-width="1.8"/></svg></div>
    <div class="lbl" style="left:121px;top:429px;color:#a9acaf">Search</div>
    <svg class="abs" style="left:289px;top:416px" width="4" height="14" viewBox="0 0 4 14"><rect x=".5" y="1" width="3" height="3" rx="1" fill="#565d64"/><rect x=".5" y="5.600" width="3" height="3" rx="1" fill="#565d64"/><rect x=".5" y="10.200" width="3" height="3" rx="1" fill="#565d64"/></svg>

    <div class="abs" style="left:0;top:472px;width:318px;height:1px;background:#dde0e3"></div>
    <div class="btn" style="left:60px;width:96px;background:#3b9bdb;border-color:#338fcd;color:#fff;font-weight:bold;letter-spacing:-0.3px">View Report</div>
    <div class="btn" style="left:166px;width:65px">OK</div>
    <div class="btn" style="left:241px;width:67px">Cancel</div>
  </div>
</div>
</body>
</html>
